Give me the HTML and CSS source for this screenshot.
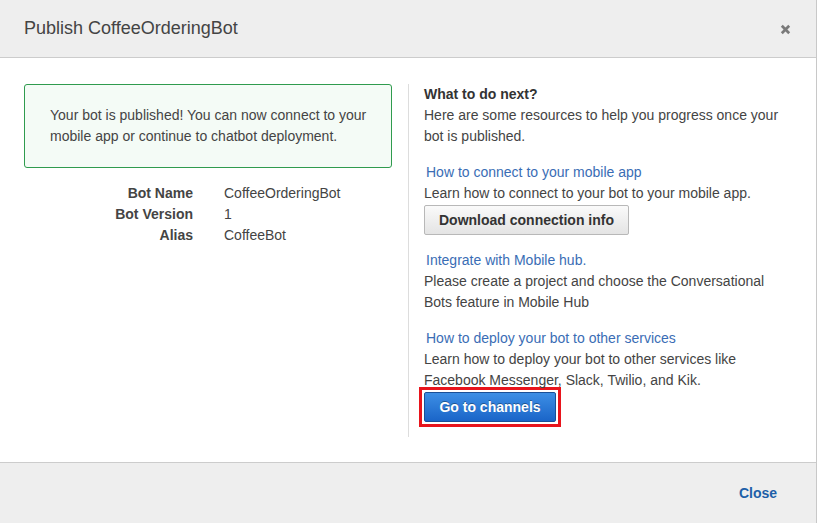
FILE: index.html
```html
<!DOCTYPE html>
<html>
<head>
<meta charset="utf-8">
<link rel="stylesheet" href="styles.css">
</head>
<body>
<div class="dialog">
  <div class="header">
    <div class="title">Publish CoffeeOrderingBot</div>
    <span class="close-x">
      <svg width="11" height="11" viewBox="0 0 11 11"><path d="M1.8 1.8 L9.2 9.2 M9.2 1.8 L1.8 9.2" stroke="#7a7a7a" stroke-width="2.7" stroke-linecap="butt"/></svg>
    </span>
  </div>
  <div class="body">
    <div class="left">
      <div class="success">Your bot is published! You can now connect to your mobile app or continue to chatbot deployment.</div>
      <div class="kv">
        <div class="k">Bot Name</div><div class="v">CoffeeOrderingBot</div>
        <div class="k">Bot Version</div><div class="v">1</div>
        <div class="k">Alias</div><div class="v">CoffeeBot</div>
      </div>
    </div>
    <div class="right">
      <div class="heading">What to do next?</div>
      <p class="text">Here are some resources to help you progress once your bot is published.</p>
      <div class="section">
        <a class="link">How to connect to your mobile app</a>
        <p class="text">Learn how to connect to your bot to your mobile app.</p>
        <button class="btn btn-default">Download connection info</button>
      </div>
      <div class="section">
        <a class="link">Integrate with Mobile hub.</a>
        <p class="text">Please create a project and choose the Conversational Bots feature in Mobile Hub</p>
      </div>
      <div class="section">
        <a class="link">How to deploy your bot to other services</a>
        <p class="text">Learn how to deploy your bot to other services like Facebook Messenger, Slack, Twilio, and Kik.</p>
        <div class="highlight"><button class="btn btn-primary">Go to channels</button></div>
      </div>
    </div>
  </div>
  <div class="footer">
    <a class="close-link">Close</a>
  </div>
</div>
</body>
</html>
```
FILE: styles.css
```css
html, body {
  margin: 0;
  padding: 0;
  background: #ffffff;
}
body {
  font-family: "Liberation Sans", Arial, sans-serif;
  font-size: 14px;
  line-height: 21px;
  color: #444444;
}
.dialog {
  width: 816px;
  border-right: 1px solid #c8c8c8;
  background: #ffffff;
}
.header {
  height: 57px;
  background: #eeeeee;
  border-bottom: 1px solid #cccccc;
  display: flex;
  align-items: center;
  justify-content: space-between;
  padding: 0 25px 0 24px;
}
.title {
  font-size: 18px;
  color: #444444;
}
.close-x {
  display: flex;
  align-items: center;
  margin-top: 1px;
}
.body {
  display: flex;
  padding: 26px 24px 25px 24px;
}
.left {
  width: 368px;
  margin-right: 16px;
}
.success {
  border: 1px solid #2f9b4e;
  background: #f4fbf6;
  border-radius: 3px;
  padding: 20px 20px 20px 25px;
}
.kv {
  display: grid;
  grid-template-columns: 169px auto;
  column-gap: 31px;
  margin-top: 15px;
}
.k {
  text-align: right;
  font-weight: bold;
  color: #444444;
}
.right {
  flex: 1;
  border-left: 1px solid #dddddd;
  padding: 0 0 15px 15px;
}
.heading {
  font-weight: bold;
  color: #333333;
}
.text {
  margin: 0;
}
.section {
  margin-top: 15px;
}
.link {
  display: block;
  color: #3a6db5;
  padding-left: 2px;
  cursor: pointer;
}
.btn {
  display: block;
  height: 30px;
  padding: 0 14px;
  font-family: "Liberation Sans", Arial, sans-serif;
  font-size: 14px;
  font-weight: bold;
  border-radius: 2px;
  cursor: pointer;
}
.btn-default {
  width: 205px;
  margin-top: 1px;
  color: #333333;
  background: linear-gradient(#fafafa, #e4e4e4);
  border: 1px solid #b8b8b8;
}
.highlight {
  display: flex;
  width: fit-content;
  margin: -4px 0 -5px -5px;
  padding: 2px;
  border: 3px solid #e8141c;
}
.btn-primary {
  width: 132px;
  color: #ffffff;
  background: linear-gradient(#3d8fe5, #1a65c8);
  border: 1px solid #1a4f96;
  text-shadow: 0 -1px 0 rgba(0, 0, 0, 0.35);
}
.footer {
  height: 60px;
  background: #eeeeee;
  border-top: 1px solid #cccccc;
  display: flex;
  align-items: center;
  justify-content: flex-end;
  padding-right: 39px;
}
.close-link {
  font-weight: bold;
  color: #1d5fa8;
  cursor: pointer;
}
```
